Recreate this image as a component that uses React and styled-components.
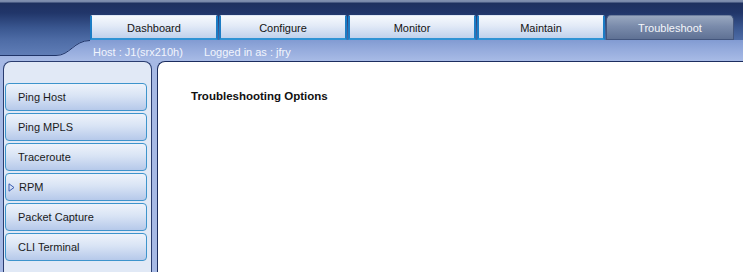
import React from "react";
import styled, { createGlobalStyle } from "styled-components";

const GlobalStyle = createGlobalStyle`
  html, body {
    margin: 0;
    padding: 0;
    height: 100%;
    overflow: hidden;
    background: #a6b9e5;
  }
  #root {
    height: 100%;
  }
`;

const Page = styled.div`
  width: 743px;
  height: 272px;
  display: flex;
  flex-direction: column;
  font-family: "Liberation Sans", Arial, sans-serif;
  font-size: 11px;
  overflow: hidden;
`;

const Header = styled.div`
  display: flex;
  flex-direction: column;
  background: linear-gradient(
    to bottom,
    #8291b0 0px,
    #7686a8 2px,
    #1e315f 3px,
    #21366a 13px,
    #3a5790 28px,
    #4e6ca6 40px,
    #6684bd 61px
  );
`;

const TabRow = styled.div`
  display: flex;
  gap: 1px;
  padding: 15px 0 0 90px;
  height: 25px;
`;

const Tab = styled.div`
  width: 128px;
  height: 25px;
  box-sizing: border-box;
  display: flex;
  align-items: center;
  justify-content: center;
  border-radius: ${(p) => (p.$active ? "5px 5px 0 0" : "2px 2px 0 0")};
  border: 1px solid ${(p) => (p.$active ? "#43557c" : "#1c7cc4")};
  border-width: ${(p) => (p.$active ? "1px" : "1px 2px 2px 2px")};
  border-top-color: ${(p) => (p.$active ? "#6e7f9f" : "#dfe8f6")};
  border-bottom-color: ${(p) => (p.$active ? "#43557c" : "#2f93d4")};
  background: ${(p) =>
    p.$active
      ? "linear-gradient(to bottom, #98a7bf 0%, #7a8bab 45%, #5f7194 100%)"
      : "linear-gradient(to bottom, #f6f9fd 0%, #e2eaf7 45%, #c0d1ec 100%)"};
  color: ${(p) => (p.$active ? "#f4f6fa" : "#141414")};
  padding-top: 1px;
`;

const InfoBar = styled.div`
  display: flex;
  height: 21px;
`;

const Shoulder = styled.svg`
  display: block;
  width: 90px;
  height: 21px;
  flex: none;
`;

const InfoText = styled.div`
  flex: 1;
  display: flex;
  align-items: center;
  gap: 21px;
  padding: 2px 0 0 3px;
  color: #f2f5fd;
  background: linear-gradient(to bottom, #829bd2 0%, #96acdd 50%, #a8bbe6 100%);
`;

const Body = styled.div`
  flex: 1;
  display: flex;
  gap: 5px;
  padding-left: 3px;
  background: #a6b9e5;
`;

const Sidebar = styled.div`
  width: 149px;
  box-sizing: border-box;
  border: 1px solid #2a3d70;
  border-bottom: none;
  border-radius: 8px 8px 0 0;
  background: #e1e9f6;
  display: flex;
  flex-direction: column;
  gap: 2px;
  padding: 21px 0 0 1px;
`;

const NavButton = styled.div`
  width: 142px;
  height: 28px;
  box-sizing: border-box;
  display: flex;
  align-items: center;
  gap: 4px;
  padding-left: ${(p) => (p.$current ? "2px" : "12px")};
  border: 1px solid #3d94cc;
  border-radius: 4px;
  background: linear-gradient(to bottom, #eef3fb 0%, #d9e4f5 45%, #b6c9ea 100%);
  color: #1a1a1a;
`;

const Arrow = styled.svg`
  width: 7px;
  height: 9px;
  flex: none;
`;

const Content = styled.div`
  flex: 1;
  background: #ffffff;
  border-top: 1px solid #1c2d5f;
  border-left: 1px solid #1c2d5f;
  border-radius: 8px 0 0 0;
  padding: 28px 0 0 33px;
`;

const Heading = styled.div`
  font-weight: bold;
  font-size: 11.5px;
  color: #111111;
`;

const tabs = ["Dashboard", "Configure", "Monitor", "Maintain", "Troubleshoot"];
const tools = ["Ping Host", "Ping MPLS", "Traceroute", "RPM", "Packet Capture", "CLI Terminal"];

export default function App() {
  return (
    <Page>
      <GlobalStyle />
      <Header>
        <TabRow>
          {tabs.map((t) => (
            <Tab key={t} $active={t === "Troubleshoot"}>
              {t}
            </Tab>
          ))}
        </TabRow>
        <InfoBar>
          <Shoulder viewBox="0 0 90 21">
            <defs>
              <linearGradient id="sh" x1="0" y1="0" x2="0" y2="1">
                <stop offset="0" stopColor="#829bd2" />
                <stop offset="0.5" stopColor="#96acdd" />
                <stop offset="1" stopColor="#a8bbe6" />
              </linearGradient>
            </defs>
            <path d="M0 15 H56 C70 15 74 0 90 0 V21 H0 Z" fill="url(#sh)" />
            <path d="M0 15.5 H56 C70 15.5 74 0.5 90 0.5" fill="none" stroke="#1f3468" strokeWidth="1" />
          </Shoulder>
          <InfoText>
            <span>Host : J1(srx210h)</span>
            <span>Logged in as : jfry</span>
          </InfoText>
        </InfoBar>
      </Header>
      <Body>
        <Sidebar>
          {tools.map((t) => (
            <NavButton key={t} $current={t === "RPM"}>
              {t === "RPM" && (
                <Arrow viewBox="0 0 7 9">
                  <path d="M1 0.8 L6 4.5 L1 8.2 Z" fill="none" stroke="#3a5bb0" strokeWidth="1" />
                </Arrow>
              )}
              {t}
            </NavButton>
          ))}
        </Sidebar>
        <Content>
          <Heading>Troubleshooting Options</Heading>
        </Content>
      </Body>
    </Page>
  );
}
